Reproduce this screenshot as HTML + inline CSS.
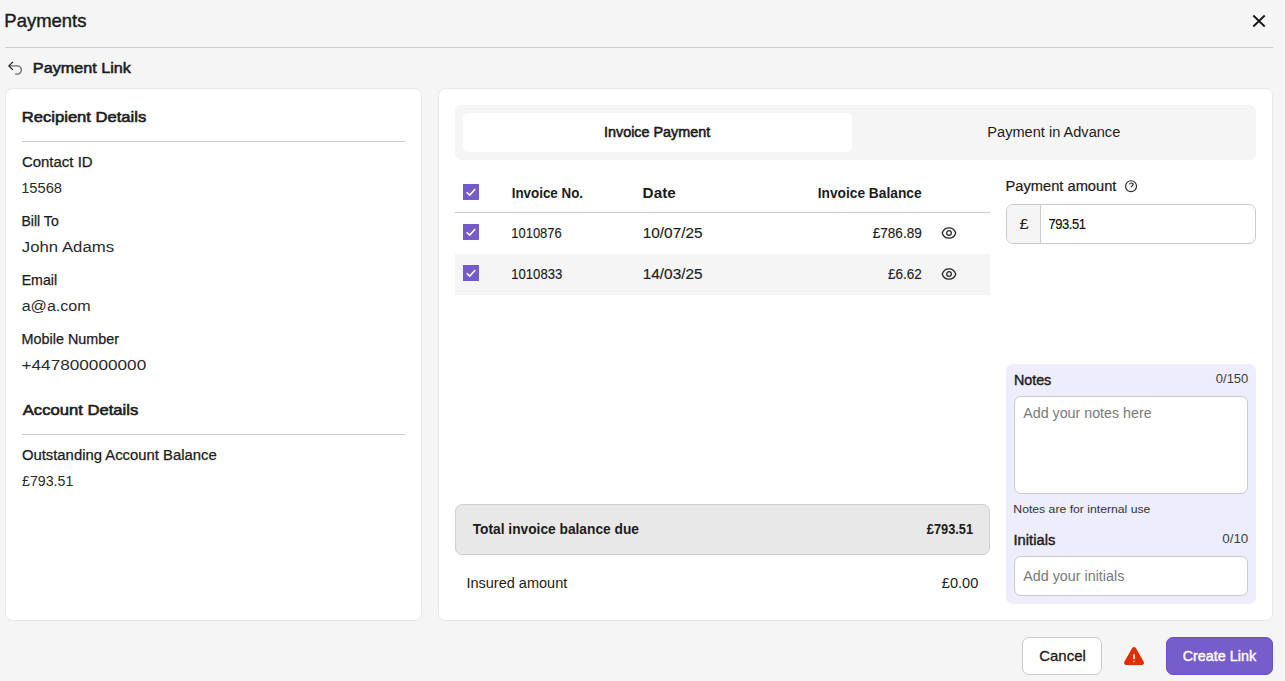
<!DOCTYPE html>
<html lang="en">
<head>
<meta charset="utf-8">
<title>Payments</title>
<style>
*{box-sizing:border-box;margin:0;padding:0}
html,body{width:1285px;height:681px;overflow:hidden}
body{background:#f5f5f5;font-family:"Liberation Sans",Arial,sans-serif;color:#1c1c1c;position:relative}
.t{position:absolute;white-space:nowrap;line-height:1;transform-origin:0 0}
.b{position:absolute}
.hr{position:absolute;background:#cbcbcb;height:1px}
.card{position:absolute;background:#fff;border:1px solid #e8e8e8;border-radius:7.5px}
.cb{position:absolute;width:16px;height:16px;background:#735bca}
.cb svg,.ic{position:absolute;left:0;top:0}
.in{position:absolute;background:#fff;border:1px solid #cbcbcb;border-radius:7px}
</style>
</head>
<body>
<svg class="b" style="left:1251px;top:13px" width="16" height="16" viewBox="0 0 16 16"><path d="M2.3 2.5 L13.7 13.5 M13.7 2.5 L2.3 13.5" stroke="#111" stroke-width="1.75" fill="none"/></svg>
<div class="hr" style="left:5px;top:47px;width:1268px"></div>
<svg class="b" style="left:6px;top:59px" width="18" height="18" viewBox="0 0 18 18"><path d="M3.4 6.9 H11.2 A4.1 4.1 0 0 1 11.2 15.1 H9.1" stroke="#6a6a6a" stroke-width="1.4" fill="none"/><path d="M6.9 2.9 L2.9 6.9 L6.9 10.9" stroke="#1c1c1c" stroke-width="1.25" fill="none"/></svg>

<div class="card" style="left:5px;top:88px;width:417px;height:533px"></div>
<div class="hr" style="left:22px;top:141px;width:383px"></div>
<div class="hr" style="left:22px;top:434px;width:383px"></div>

<div class="card" style="left:438px;top:88px;width:835px;height:533px"></div>
<div class="b" style="left:455px;top:105px;width:801px;height:55px;background:#f5f5f5;border-radius:6px"></div>
<div class="b" style="left:463px;top:113px;width:389px;height:39px;background:#fff;border-radius:5px"></div>

<div class="cb" style="left:463px;top:184px"><svg width="16" height="16" viewBox="0 0 16 16"><path d="M3.7 8.3 L6.7 11.1 L12.3 4.9" stroke="#fff" stroke-width="1.5" fill="none"/></svg></div>
<div class="hr" style="left:455px;top:212px;width:535px"></div>
<div class="cb" style="left:463px;top:224px"><svg width="16" height="16" viewBox="0 0 16 16"><path d="M3.7 8.3 L6.7 11.1 L12.3 4.9" stroke="#fff" stroke-width="1.5" fill="none"/></svg></div>
<div class="b" style="left:940px;top:226px"><svg width="18" height="14" viewBox="0 0 18 14"><path d="M2.25 7 C3.1 4.2 5.8 1.85 9 1.85 C12.2 1.85 14.9 4.2 15.75 7 C14.9 9.8 12.2 12.15 9 12.15 C5.8 12.15 3.1 9.8 2.25 7 Z" stroke="#262626" stroke-width="1.3" fill="none" stroke-linejoin="round"/><circle cx="9" cy="7" r="2.3" stroke="#262626" stroke-width="1.3" fill="none"/></svg></div>
<div class="b" style="left:455px;top:254px;width:535px;height:41px;background:#f5f5f5"></div>
<div class="cb" style="left:463px;top:265px"><svg width="16" height="16" viewBox="0 0 16 16"><path d="M3.7 8.3 L6.7 11.1 L12.3 4.9" stroke="#fff" stroke-width="1.5" fill="none"/></svg></div>
<div class="b" style="left:940px;top:267px"><svg width="18" height="14" viewBox="0 0 18 14"><path d="M2.25 7 C3.1 4.2 5.8 1.85 9 1.85 C12.2 1.85 14.9 4.2 15.75 7 C14.9 9.8 12.2 12.15 9 12.15 C5.8 12.15 3.1 9.8 2.25 7 Z" stroke="#262626" stroke-width="1.3" fill="none" stroke-linejoin="round"/><circle cx="9" cy="7" r="2.3" stroke="#262626" stroke-width="1.3" fill="none"/></svg></div>

<div class="b" style="left:455px;top:504px;width:535px;height:51px;background:#e8e8e8;border:1px solid #d0d0d0;border-radius:7px"></div>

<svg class="b" style="left:1124px;top:179px" width="14" height="14" viewBox="0 0 14 14"><circle cx="7.05" cy="7.2" r="5.45" stroke="#2a2a2a" stroke-width="1.15" fill="none"/><path d="M5.4 5.3 C5.7 4.4 6.5 4.0 7.4 4.0 C8.6 4.0 9.3 4.6 9.2 5.4 C9.1 6.1 8.5 6.5 6.7 8.2" stroke="#222" stroke-width="1.1" fill="none"/><circle cx="7" cy="10" r=".5" fill="#aaa"/></svg>
<div class="in" style="left:1006px;top:204px;width:250px;height:40px;overflow:hidden"><div style="position:absolute;left:0;top:0;width:34px;height:38px;background:#f5f5f5;border-right:1px solid #cbcbcb"></div></div>

<div class="b" style="left:1006px;top:364px;width:250px;height:240px;background:#eeedfd;border-radius:7px"></div>
<div class="in" style="left:1014px;top:396px;width:234px;height:98px"></div>
<div class="in" style="left:1014px;top:556px;width:234px;height:40px"></div>

<div class="in" style="left:1022px;top:637px;width:80px;height:38px"></div>
<svg class="b" style="left:1123px;top:646px" width="22" height="20" viewBox="0 0 22 20"><path d="M11.05 3.4 L18.7 16.8 H3.4 Z" fill="#e12d02" stroke="#e12d02" stroke-width="4.6" stroke-linejoin="round"/><path d="M11.05 8.2 V13.2" stroke="#fff" stroke-opacity=".8" stroke-width="2"/><circle cx="11.05" cy="15.4" r=".9" fill="#fff" fill-opacity=".7"/></svg>
<div class="b" style="left:1166px;top:637px;width:107px;height:38px;background:#755dcb;border:1px solid #6a50c6;border-radius:7px"></div>

<div class="t" style="left:4px;top:13px;font-size:17.7px;font-weight:400;letter-spacing:0.000px;transform:translateX(0.34px) scaleX(1.0444);-webkit-text-stroke:.4px #1c1c1c">Payments</div>
<div class="t" style="left:32px;top:61px;font-size:14.8px;font-weight:400;letter-spacing:0.000px;transform:translateX(0.87px) scaleX(1.0938);-webkit-text-stroke:.55px #1c1c1c">Payment Link</div>
<div class="t" style="left:21px;top:109px;font-size:15.0px;font-weight:400;letter-spacing:0.000px;transform:translateX(0.81px) scaleX(1.1054);-webkit-text-stroke:.6px #1c1c1c">Recipient Details</div>
<div class="t" style="left:21px;top:156px;font-size:13.8px;font-weight:400;letter-spacing:0.000px;transform:translateX(0.92px) scaleX(1.0847);-webkit-text-stroke:.25px #1c1c1c">Contact ID</div>
<div class="t" style="left:21px;top:180px;font-size:15.4px;font-weight:400;letter-spacing:0.000px;transform:translateX(0.14px) scaleX(0.9550);color:#2b2b2b">15568</div>
<div class="t" style="left:21px;top:215px;font-size:13.8px;font-weight:400;letter-spacing:0.000px;transform:translateX(0.51px) scaleX(1.0168);-webkit-text-stroke:.25px #1c1c1c">Bill To</div>
<div class="t" style="left:21px;top:239px;font-size:15.4px;font-weight:400;letter-spacing:0.000px;transform:translateX(0.84px) scaleX(1.0883);color:#2b2b2b">John Adams</div>
<div class="t" style="left:21px;top:274px;font-size:13.8px;font-weight:400;letter-spacing:0.000px;transform:translateX(0.64px) scaleX(1.0263);-webkit-text-stroke:.25px #1c1c1c">Email</div>
<div class="t" style="left:21px;top:298px;font-size:15.4px;font-weight:400;letter-spacing:0.000px;transform:translateX(0.68px) scaleX(1.0443);color:#2b2b2b">a@a.com</div>
<div class="t" style="left:21px;top:333px;font-size:13.8px;font-weight:400;letter-spacing:0.000px;transform:translateX(0.55px) scaleX(1.0421);-webkit-text-stroke:.25px #1c1c1c">Mobile Number</div>
<div class="t" style="left:21px;top:357px;font-size:15.4px;font-weight:400;letter-spacing:0.000px;transform:translateX(0.47px) scaleX(1.1168);color:#2b2b2b">+447800000000</div>
<div class="t" style="left:22px;top:402px;font-size:15.0px;font-weight:400;letter-spacing:0.000px;transform:translateX(0.73px) scaleX(1.1083);-webkit-text-stroke:.6px #1c1c1c">Account Details</div>
<div class="t" style="left:21px;top:449px;font-size:13.8px;font-weight:400;letter-spacing:0.000px;transform:translateX(0.89px) scaleX(1.0760);-webkit-text-stroke:.25px #1c1c1c">Outstanding Account Balance</div>
<div class="t" style="left:22px;top:473px;font-size:15.4px;font-weight:400;letter-spacing:0.000px;transform:translateX(0.03px) scaleX(0.9208);color:#2b2b2b">£793.51</div>
<div class="t" style="left:604px;top:126px;font-size:13.8px;font-weight:400;letter-spacing:0.000px;transform:translateX(0.05px) scaleX(1.0404);-webkit-text-stroke:.55px #1c1c1c">Invoice Payment</div>
<div class="t" style="left:987px;top:126px;font-size:13.8px;font-weight:400;letter-spacing:0.000px;transform:translateX(0.33px) scaleX(1.0567);">Payment in Advance</div>
<div class="t" style="left:511px;top:186px;font-size:14.0px;font-weight:700;letter-spacing:0.000px;transform:translateX(0.74px) scaleX(0.9549);">Invoice No.</div>
<div class="t" style="left:642px;top:186px;font-size:14.0px;font-weight:700;letter-spacing:0.000px;transform:translateX(0.60px) scaleX(1.0911);">Date</div>
<div class="t" style="left:817px;top:186px;font-size:14.0px;font-weight:700;letter-spacing:0.000px;transform:translateX(0.67px) scaleX(0.9817);">Invoice Balance</div>
<div class="t" style="left:511px;top:227px;font-size:13.9px;font-weight:400;letter-spacing:0.000px;transform:translateX(0.33px) scaleX(0.9318);-webkit-text-stroke:.15px #1c1c1c">1010876</div>
<div class="t" style="left:642px;top:227px;font-size:13.9px;font-weight:400;letter-spacing:0.000px;transform:translateX(0.77px) scaleX(1.1048);-webkit-text-stroke:.15px #1c1c1c">10/07/25</div>
<div class="t" style="left:872px;top:227px;font-size:13.9px;font-weight:400;letter-spacing:0.000px;transform:translateX(0.67px) scaleX(0.9791);-webkit-text-stroke:.15px #1c1c1c">£786.89</div>
<div class="t" style="left:511px;top:268px;font-size:13.9px;font-weight:400;letter-spacing:0.000px;transform:translateX(0.27px) scaleX(0.9423);-webkit-text-stroke:.15px #1c1c1c">1010833</div>
<div class="t" style="left:642px;top:268px;font-size:13.9px;font-weight:400;letter-spacing:0.000px;transform:translateX(0.77px) scaleX(1.1048);-webkit-text-stroke:.15px #1c1c1c">14/03/25</div>
<div class="t" style="left:887px;top:268px;font-size:13.9px;font-weight:400;letter-spacing:0.000px;transform:translateX(0.97px) scaleX(0.9746);-webkit-text-stroke:.15px #1c1c1c">£6.62</div>
<div class="t" style="left:472px;top:523px;font-size:13.8px;font-weight:700;letter-spacing:0.000px;transform:translateX(0.75px) scaleX(0.9958);">Total invoice balance due</div>
<div class="t" style="left:926px;top:523px;font-size:13.8px;font-weight:700;letter-spacing:0.000px;transform:translateX(0.79px) scaleX(0.9275);">£793.51</div>
<div class="t" style="left:466px;top:577px;font-size:13.8px;font-weight:400;letter-spacing:0.000px;transform:translateX(0.45px) scaleX(1.0516);">Insured amount</div>
<div class="t" style="left:941px;top:577px;font-size:13.8px;font-weight:400;letter-spacing:0.000px;transform:translateX(0.78px) scaleX(1.0580);">£0.00</div>
<div class="t" style="left:1005px;top:180px;font-size:13.8px;font-weight:400;letter-spacing:0.000px;transform:translateX(0.51px) scaleX(1.0635);-webkit-text-stroke:.2px #1c1c1c">Payment amount</div>
<div class="t" style="left:1019px;top:218px;font-size:13.9px;font-weight:400;letter-spacing:0.000px;transform:translateX(0.44px) scaleX(1.1969);">£</div>
<div class="t" style="left:1048px;top:218px;font-size:13.9px;font-weight:400;letter-spacing:-0.508px;transform:translateX(0.61px) scaleX(0.9326);color:#0c0c0c;-webkit-text-stroke:.15px #0c0c0c">793.51</div>
<div class="t" style="left:1013px;top:374px;font-size:13.8px;font-weight:400;letter-spacing:0.000px;transform:translateX(0.90px) scaleX(1.0362);-webkit-text-stroke:.4px #1c1c1c">Notes</div>
<div class="t" style="left:1215px;top:373px;font-size:12.8px;font-weight:400;letter-spacing:0.000px;transform:translateX(0.76px) scaleX(1.0183);color:#3d3d3d">0/150</div>
<div class="t" style="left:1023px;top:407px;font-size:13.8px;font-weight:400;letter-spacing:-0.000px;transform:translateX(0.20px) scaleX(1.0333);color:#7a7a7a">Add your notes here</div>
<div class="t" style="left:1013px;top:504px;font-size:11.8px;font-weight:400;letter-spacing:0.000px;transform:translateX(0.33px) scaleX(1.0349);color:#333">Notes are for internal use</div>
<div class="t" style="left:1013px;top:534px;font-size:13.8px;font-weight:400;letter-spacing:0.000px;transform:translateX(0.48px) scaleX(1.0693);-webkit-text-stroke:.4px #1c1c1c">Initials</div>
<div class="t" style="left:1222px;top:533px;font-size:12.8px;font-weight:400;letter-spacing:0.000px;transform:translateX(0.20px) scaleX(1.0484);color:#3d3d3d">0/10</div>
<div class="t" style="left:1023px;top:570px;font-size:13.8px;font-weight:400;letter-spacing:0.000px;transform:translateX(0.20px) scaleX(1.0383);color:#7a7a7a">Add your initials</div>
<div class="t" style="left:1039px;top:649px;font-size:14.2px;font-weight:400;letter-spacing:0.000px;transform:translateX(0.26px) scaleX(1.0530);-webkit-text-stroke:.3px #1c1c1c">Cancel</div>
<div class="t" style="left:1182px;top:649px;font-size:14.2px;font-weight:400;letter-spacing:0.000px;transform:translateX(0.71px) scaleX(1.0115);color:#fff;-webkit-text-stroke:.4px #fff">Create Link</div>
</body>
</html>
